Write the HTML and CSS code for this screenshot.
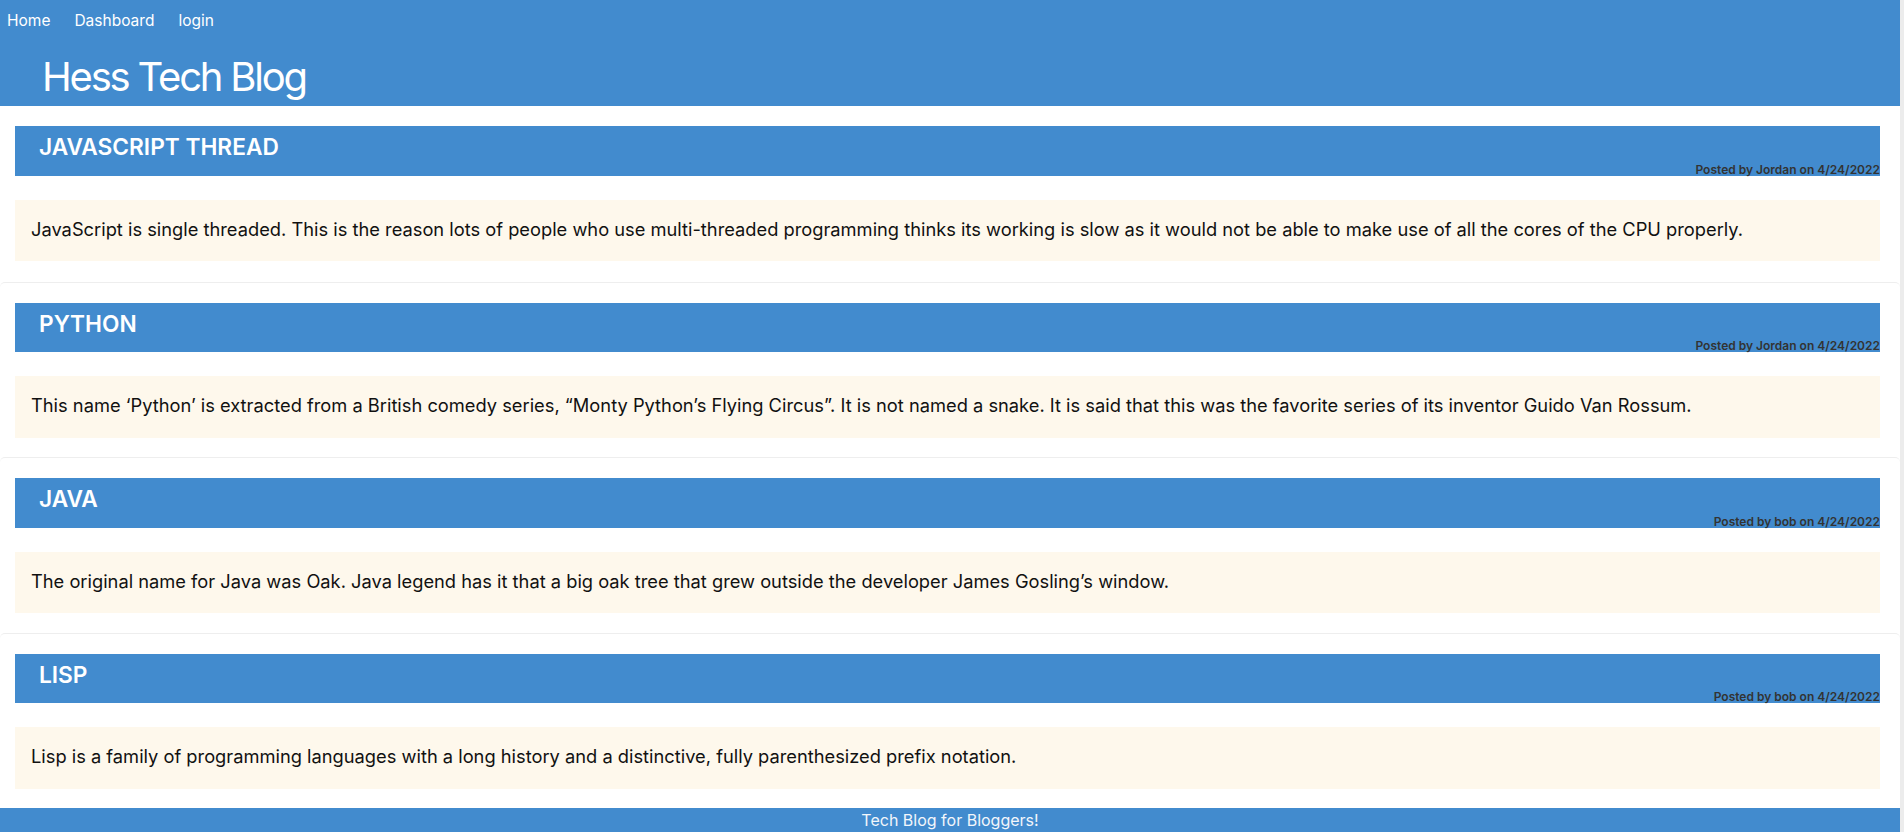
FILE: index.html
```html
<!DOCTYPE html>
<html lang="en">
<head>
<meta charset="utf-8">
<title>Hess Tech Blog</title>
<link rel="stylesheet" href="styles.css">
</head>
<body>
<div class="page">
  <header class="site-header">
    <nav class="nav">
      <a href="#">Home</a>
      <a href="#">Dashboard</a>
      <a href="#">login</a>
    </nav>
    <h1 class="site-title">Hess Tech Blog</h1>
  </header>
  <main class="posts">
    <article class="post">
      <div class="post-head">
        <h2 class="post-title">JAVASCRIPT THREAD</h2>
        <div class="post-meta">Posted by Jordan on 4/24/2022</div>
      </div>
      <div class="post-body">JavaScript is single threaded. This is the reason lots of people who use multi-threaded programming thinks its working is slow as it would not be able to make use of all the cores of the CPU properly.</div>
    </article>
    <article class="post">
      <div class="post-head">
        <h2 class="post-title">PYTHON</h2>
        <div class="post-meta">Posted by Jordan on 4/24/2022</div>
      </div>
      <div class="post-body">This name ‘Python’ is extracted from a British comedy series, “Monty Python’s Flying Circus”. It is not named a snake. It is said that this was the favorite series of its inventor Guido Van Rossum.</div>
    </article>
    <article class="post">
      <div class="post-head">
        <h2 class="post-title">JAVA</h2>
        <div class="post-meta">Posted by bob on 4/24/2022</div>
      </div>
      <div class="post-body">The original name for Java was Oak. Java legend has it that a big oak tree that grew outside the developer James Gosling’s window.</div>
    </article>
    <article class="post">
      <div class="post-head">
        <h2 class="post-title">LISP</h2>
        <div class="post-meta">Posted by bob on 4/24/2022</div>
      </div>
      <div class="post-body">Lisp is a family of programming languages with a long history and a distinctive, fully parenthesized prefix notation.</div>
    </article>
  </main>
  <footer class="site-footer">Tech Blog for Bloggers!</footer>
</div>
</body>
</html>
```
FILE: styles.css
```css
* { box-sizing: border-box; }
html, body { margin: 0; padding: 0; }
body {
  font-family: Inter, "Liberation Sans", sans-serif;
  color: #111;
  background: #fff;
}
.page {
  width: 100%;
  border-right: 4px solid #ececec;
}
.site-header {
  background: #428bce;
  height: 106px;
  padding: 9px 0 0 0;
}
.nav {
  display: flex;
  gap: 24px;
  padding-left: 7px;
  line-height: 24px;
  font-size: 15.5px;
}
.nav a {
  color: #fff;
  text-decoration: none;
}
.site-title {
  margin: 20px 0 0 42px;
  font-size: 40px;
  line-height: 48px;
  font-weight: 400;
  letter-spacing: -2.2px;
  color: #fff;
}
.posts {
  display: flex;
  flex-direction: column;
}
.post {
  height: 175.5px;
  padding: 20px 20px 0 15px;
  border-top: 1px solid #eeeeee;
  border-radius: 5px;
}
.post:first-child { border-top: none; }
.post-head {
  background: #428bce;
  height: 49.5px;
  display: flex;
  flex-direction: column;
  justify-content: space-between;
  padding: 7px 0 0 24px;
}
.post-title {
  margin: 0;
  font-size: 22.7px;
  line-height: 28px;
  font-weight: 600;
  color: #fff;
}
.post-meta {
  align-self: flex-end;
  font-size: 12px;
  line-height: 14px;
  font-weight: 600;
  color: #333;
  margin-bottom: -1px;
}
.post-body {
  margin-top: 24px;
  height: 61.5px;
  background: #fef8ec;
  padding: 16px 17px 16px 16px;
  font-size: 18.3px;
  line-height: 27px;
}
.site-footer {
  background: #428bce;
  height: 24px;
  line-height: 24px;
  text-align: center;
  color: #f2f6fb;
  font-size: 16px;
}
```
